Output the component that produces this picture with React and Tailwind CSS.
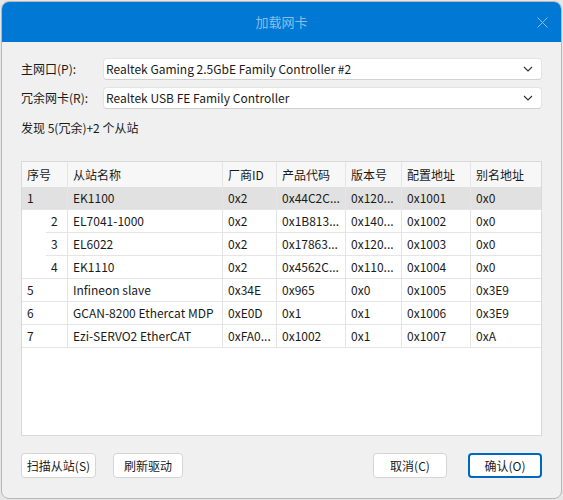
import React from "react";

const columns = [
  { title: "序号", width: "w-[46px]" },
  { title: "从站名称", width: "w-[155px]" },
  { title: "厂商ID", width: "w-[54px]" },
  { title: "产品代码", width: "w-[69px]" },
  { title: "版本号", width: "w-[56px]" },
  { title: "配置地址", width: "w-[69px]" },
  { title: "别名地址", width: "w-[70px]" },
];

const slaves = [
  { no: "1", name: "EK1100", vendor: "0x2", product: "0x44C2C...", rev: "0x120...", addr: "0x1001", alias: "0x0", selected: true },
  { no: "2", name: "EL7041-1000", vendor: "0x2", product: "0x1B813...", rev: "0x140...", addr: "0x1002", alias: "0x0", child: true },
  { no: "3", name: "EL6022", vendor: "0x2", product: "0x17863...", rev: "0x120...", addr: "0x1003", alias: "0x0", child: true },
  { no: "4", name: "EK1110", vendor: "0x2", product: "0x4562C...", rev: "0x110...", addr: "0x1004", alias: "0x0", child: true, last: true },
  { no: "5", name: "Infineon slave", vendor: "0x34E", product: "0x965", rev: "0x0", addr: "0x1005", alias: "0x3E9" },
  { no: "6", name: "GCAN-8200 Ethercat MDP", vendor: "0xE0D", product: "0x1", rev: "0x1", addr: "0x1006", alias: "0x3E9" },
  { no: "7", name: "Ezi-SERVO2 EtherCAT", vendor: "0xFA0...", product: "0x1002", rev: "0x1", addr: "0x1007", alias: "0xA" },
];

const Chevron = () => (
  <svg width="10" height="6" viewBox="0 0 10 6" className="shrink-0">
    <path d="M1 1 L5 5 L9 1" fill="none" stroke="#333" strokeWidth="1.1" />
  </svg>
);

const Combo = ({ label, value }) => (
  <div className="flex items-center">
    <span className="w-[82px] shrink-0">{label}</span>
    <div className="flex-1 h-[22px] flex items-center justify-between pl-[2px] pr-[8px] bg-white border border-[#e3e3e3] border-b-[#d0d0d0] rounded-[4px]">
      <span>{value}</span>
      <Chevron />
    </div>
  </div>
);

const Cell = ({ width, children, className = "" }) => (
  <div
    className={`${width} shrink-0 h-full flex items-center pl-[5px] border-r border-[#e5e5e5] whitespace-nowrap overflow-hidden ${className}`}
  >
    {children}
  </div>
);

const Row = ({ s }) => {
  const cells = [s.name, s.vendor, s.product, s.rev, s.addr, s.alias];
  return (
    <div className={`flex h-[23px] ${s.selected ? "bg-[#e1e1e1]" : "bg-white"}`}>
      {s.child ? (
        <div className="w-[46px] shrink-0 h-full flex border-r border-[#e5e5e5]">
          <div className={`w-[24px] h-full ${s.last ? "border-b border-[#e5e5e5]" : ""}`} />
          <div className="flex-1 h-full flex items-center pl-[5px] border-b border-[#e5e5e5]">
            {s.no}
          </div>
        </div>
      ) : (
        <Cell width="w-[46px]" className="border-b">
          {s.no}
        </Cell>
      )}
      {cells.map((c, i) => (
        <Cell key={i} width={columns[i + 1].width} className={`border-b ${i === 5 ? "border-r-0" : ""}`}>
          {c}
        </Cell>
      ))}
    </div>
  );
};

const Button = ({ children, primary, width }) => (
  <button
    className={`h-[25px] ${width} flex items-center justify-center bg-white rounded-[4px] text-[#1a1a1a] ${
      primary ? "border-2 border-[#0067c0]" : "border border-[#d5d5d5]"
    }`}
  >
    {children}
  </button>
);

export default function App() {
  return (
    <div className="w-[563px] h-[500px] bg-[#e6e6e6] pt-[1px] pl-[1px] font-['Noto_Sans_CJK_SC',sans-serif] text-[12px] text-[#1a1a1a]">
      <div className="w-[561px] h-[498px] rounded-[8px] overflow-hidden border border-[#b8b8b8] bg-[#f0f0f0] flex flex-col">
        {/* title bar */}
        <div className="h-[40px] shrink-0 bg-[#0078d4] flex items-center justify-center relative">
          <span className="text-[13px] text-[#8dbde9]">加载网卡</span>
          <svg width="11" height="11" viewBox="0 0 11 11" className="absolute right-[13px] top-[15px]">
            <path d="M0.5 0.5 L10.5 10.5 M10.5 0.5 L0.5 10.5" stroke="#8dbde9" strokeWidth="1" />
          </svg>
        </div>

        <div className="flex-1 flex flex-col px-[19px]">
          <div className="mt-[16px] flex flex-col gap-[7px]">
            <Combo label="主网口(P):" value="Realtek Gaming 2.5GbE Family Controller #2" />
            <Combo label="冗余网卡(R):" value="Realtek USB FE Family Controller" />
          </div>

          <div className="mt-[10px] h-[18px] flex items-center">发现 5(冗余)+2 个从站</div>

          {/* slave table */}
          <div className="mt-[24px] h-[275px] bg-white border border-[#d9d9d9] flex flex-col">
            <div className="flex h-[25px] bg-[#f7f7f7]">
              {columns.map((c, i) => (
                <Cell key={c.title} width={c.width} className={i === 6 ? "border-r-0" : ""}>
                  {c.title}
                </Cell>
              ))}
            </div>
            {slaves.map((s) => (
              <Row key={s.no} s={s} />
            ))}
          </div>

          <div className="mt-[17px] flex items-center">
            <Button width="w-[75px]">扫描从站(S)</Button>
            <div className="w-[17px]" />
            <Button width="w-[70px]">刷新驱动</Button>
            <div className="flex-1" />
            <Button width="w-[74px]">取消(C)</Button>
            <div className="w-[21px]" />
            <Button primary width="w-[74px]">确认(O)</Button>
          </div>
        </div>
      </div>
    </div>
  );
}
